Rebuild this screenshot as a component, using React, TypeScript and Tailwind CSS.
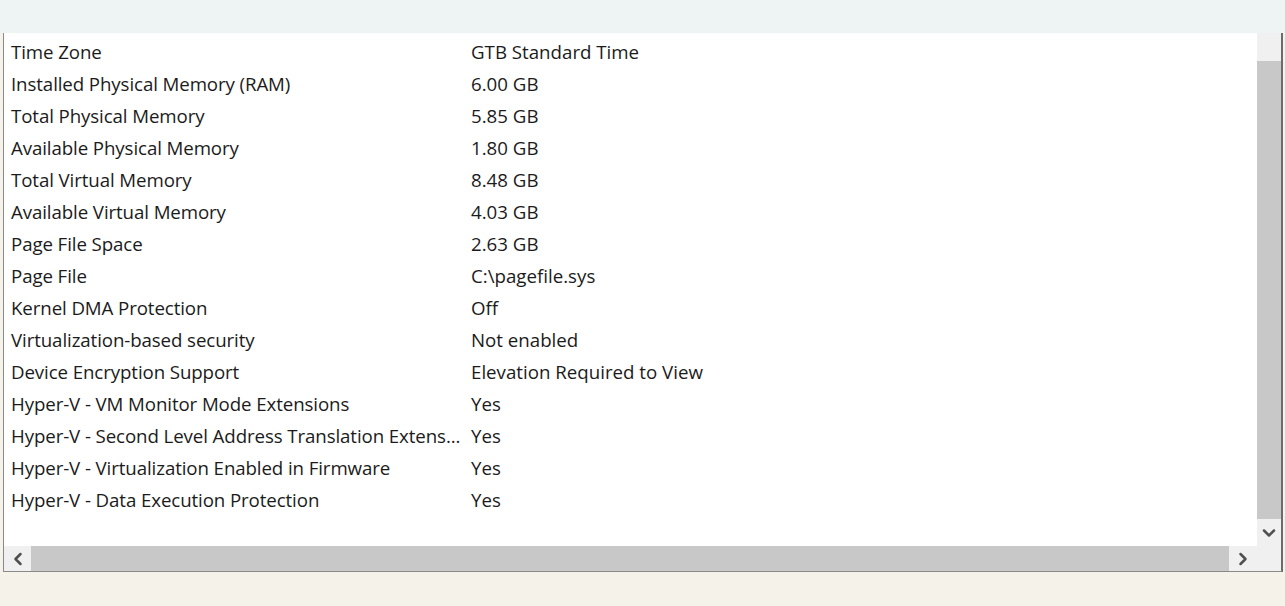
import { ChevronDown, ChevronLeft, ChevronRight } from "lucide-react"

const rows: [string, string][] = [
  ["Time Zone", "GTB Standard Time"],
  ["Installed Physical Memory (RAM)", "6.00 GB"],
  ["Total Physical Memory", "5.85 GB"],
  ["Available Physical Memory", "1.80 GB"],
  ["Total Virtual Memory", "8.48 GB"],
  ["Available Virtual Memory", "4.03 GB"],
  ["Page File Space", "2.63 GB"],
  ["Page File", "C:\\pagefile.sys"],
  ["Kernel DMA Protection", "Off"],
  ["Virtualization-based security", "Not enabled"],
  ["Device Encryption Support", "Elevation Required to View"],
  ["Hyper-V - VM Monitor Mode Extensions", "Yes"],
  ["Hyper-V - Second Level Address Translation Extens...", "Yes"],
  ["Hyper-V - Virtualization Enabled in Firmware", "Yes"],
  ["Hyper-V - Data Execution Protection", "Yes"],
]

export default function App() {
  return (
    <div className="w-[1285px] h-[606px] flex flex-col bg-[#f4f2e9] overflow-hidden" style={{ fontFamily: '"Open Sans", "Noto Sans", sans-serif' }}>
      {/* top band */}
      <div className="h-[33px] shrink-0 bg-[#eef3f3]" />

      {/* list window */}
      <div className="ml-[3px] mr-[2px] h-[539px] shrink-0 flex flex-col border-l border-r-2 border-b border-[#8a8a8a] border-r-[#6b6b6b] bg-white">
        <div className="flex flex-1 min-h-0">
          {/* rows */}
          <div className="flex-1 pt-[3px] text-[18.7px] text-[#1b1b1b]">
            {rows.map(([name, value]) => (
              <div key={name} className="h-[32px] flex items-center">
                <div className="w-[467px] pl-[7px] whitespace-nowrap tracking-[-0.1px]">{name}</div>
                <div className="whitespace-nowrap">{value}</div>
              </div>
            ))}
          </div>

          {/* vertical scrollbar */}
          <div className="w-[24px] flex flex-col bg-[#f0f0f0]">
            <div className="h-[28px]" />
            <div className="flex-1 bg-[#c8c8c8]" />
            <div className="h-[27px] flex items-center justify-center">
              <ChevronDown className="w-[20px] h-[20px] text-[#505050]" strokeWidth={3} />
            </div>
          </div>
        </div>

        {/* horizontal scrollbar */}
        <div className="h-[25px] flex bg-[#f0f0f0]">
          <div className="w-[27px] flex items-center justify-center">
            <ChevronLeft className="w-[20px] h-[20px] text-[#505050]" strokeWidth={3} />
          </div>
          <div className="flex-1 bg-[#c8c8c8]" />
          <div className="w-[28px] flex items-center justify-center">
            <ChevronRight className="w-[20px] h-[20px] text-[#505050]" strokeWidth={3} />
          </div>
          <div className="w-[24px] bg-[#f0f0f0]" />
        </div>
      </div>
    </div>
  )
}
